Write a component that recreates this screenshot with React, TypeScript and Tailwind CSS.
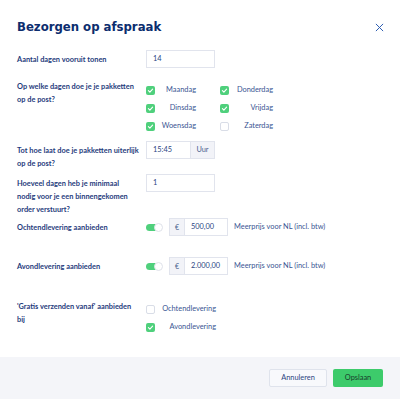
import React from "react";

const Check = ({checked}: {checked: boolean}) => (
    <span
        className={
            checked
                ? "flex items-center justify-center w-[9px] h-[9px] rounded-[2px] bg-[#4fd07c]"
                : "block w-[9px] h-[9px] rounded-[2px] border border-[#d9dde7] bg-white"
        }
    >
        {checked && (
            <svg viewBox="0 0 10 10" className="w-[7px] h-[7px]">
                <path d="M2 5.2 4.1 7.2 8 3" fill="none" stroke="white" strokeWidth="1.6"
                      strokeLinecap="round" strokeLinejoin="round"/>
            </svg>
        )}
    </span>
);

const Option = ({label, checked}: { label: string, checked: boolean }) => (
    <div className="flex items-center justify-between h-[18px]">
        <Check checked={checked}/>
        <span className="text-[7.4px] text-[#3a5593]">{label}</span>
    </div>
);

const Toggle = () => (
    <div className="relative w-[17px] h-[9px]">
        <div className="absolute left-0 top-[1px] w-[14px] h-[7px] rounded-full bg-[#4fd07c]"/>
        <div className="absolute right-0 top-0 w-[9px] h-[9px] rounded-full bg-white border border-[#dfe2ea]"/>
    </div>
);

// labels wrap like the original, so lines are given explicitly
const Label = ({lines, className = ""}: { lines: string[], className?: string }) => (
    <div className={"text-[7.4px] leading-[13px] font-bold text-[#1f3b7c] whitespace-nowrap " + className}>
        {lines.map(l => <div key={l}>{l}</div>)}
    </div>
);

const input = "h-[18px] border border-[#e1e4ed] bg-white flex items-center pl-[6px] text-[7.4px] text-[#2c4683]";

export default function App() {
    const days: [string, boolean][] = [
        ["Maandag", true], ["Donderdag", true],
        ["Dinsdag", true], ["Vrijdag", true],
        ["Woensdag", true], ["Zaterdag", false],
    ];

    return (
        <div className="w-[400px] h-[399px] bg-white flex flex-col font-['Lato',sans-serif] overflow-hidden">
            <div className="flex items-center justify-between pl-[17px] pr-[16px] pt-[16px]">
                <h1 className="font-['DejaVu_Sans',sans-serif] text-[11.7px] leading-[22px] font-bold text-[#0c2d6e]">
                    Bezorgen op afspraak
                </h1>
                <svg viewBox="0 0 10 10" className="w-[9px] h-[9px]">
                    <path d="M1 1 9 9M9 1 1 9" stroke="#2d5db2" strokeWidth="1.1" fill="none"/>
                </svg>
            </div>

            <div className="px-[17px]">
                <div className="grid grid-cols-[129px_1fr] items-center mt-[12px]">
                    <Label lines={["Aantal dagen vooruit tonen"]}/>
                    <div className={input + " w-[69px]"}>14</div>
                </div>

                <div className="grid grid-cols-[129px_1fr] mt-[12px]">
                    <Label lines={["Op welke dagen doe je je pakketten", "op de post?"]}/>
                    <div className="grid grid-cols-[50px_53px] gap-x-[24px] mt-[1px]">
                        {days.map(([d, c]) => <Option key={d} label={d} checked={c}/>)}
                    </div>
                </div>

                <div className="grid grid-cols-[129px_1fr] mt-[6px]">
                    <Label className="pt-[3px]" lines={["Tot hoe laat doe je pakketten uiterlijk", "op de post?"]}/>
                    <div className="flex h-[18px] w-[69px] border border-[#e1e4ed]">
                        <div className="flex-1 flex items-center pl-[6px] text-[7.4px] text-[#2c4683]">15:45</div>
                        <div className="w-[24px] flex items-center justify-center bg-[#f2f3f8] border-l border-[#e1e4ed] text-[7.4px] text-[#4a5f8e]">Uur</div>
                    </div>
                </div>

                <div className="grid grid-cols-[129px_1fr] mt-[4px]">
                    <Label className="pt-[3px]"
                           lines={["Hoeveel dagen heb je minimaal", "nodig voor je een binnengekomen", "order verstuurt?"]}/>
                    <div className={input + " w-[69px]"}>1</div>
                </div>

                {[["Ochtendlevering aanbieden", "500,00", "mt-[2px]"], ["Avondlevering aanbieden", "2.000,00", "mt-[21px]"]].map(([t, v, m]) => (
                    <div key={t} className={"grid grid-cols-[129px_1fr] items-center " + m}>
                        <Label lines={[t]}/>
                        <div className="flex items-center">
                            <Toggle/>
                            <div className="flex h-[18px] w-[59px] ml-[6px] border border-[#e1e4ed]">
                                <div className="w-[15px] flex items-center justify-center bg-[#f2f3f8] border-r border-[#e1e4ed] text-[7px] text-[#4a5f8e]">€</div>
                                <div className="flex-1 flex items-center pl-[6px] text-[7.4px] text-[#2c4683]">{v}</div>
                            </div>
                            <span className="ml-[6px] text-[7.4px] text-[#3a5593]">Meerprijs voor NL (incl. btw)</span>
                        </div>
                    </div>
                ))}

                <div className="grid grid-cols-[129px_1fr] mt-[25px]">
                    <Label lines={["'Gratis verzenden vanaf' aanbieden", "bij"]}/>
                    <div className="w-[70px]">
                        <Option label="Ochtendlevering" checked={false}/>
                        <Option label="Avondlevering" checked={true}/>
                    </div>
                </div>
            </div>

            <div className="mt-auto h-[42px] bg-[#f4f5f9] flex items-center justify-end gap-[6px] pr-[17px]">
                <button className="w-[58px] h-[18px] bg-[#f8f9fc] border border-[#dfe3ec] rounded-[2px] text-[7.4px] text-[#2c4683]">
                    Annuleren
                </button>
                <button className="w-[50px] h-[18px] bg-[#3dcb6b] rounded-[2px] text-[7.4px] text-[#173d2b]">
                    Opslaan
                </button>
            </div>
        </div>
    );
}
